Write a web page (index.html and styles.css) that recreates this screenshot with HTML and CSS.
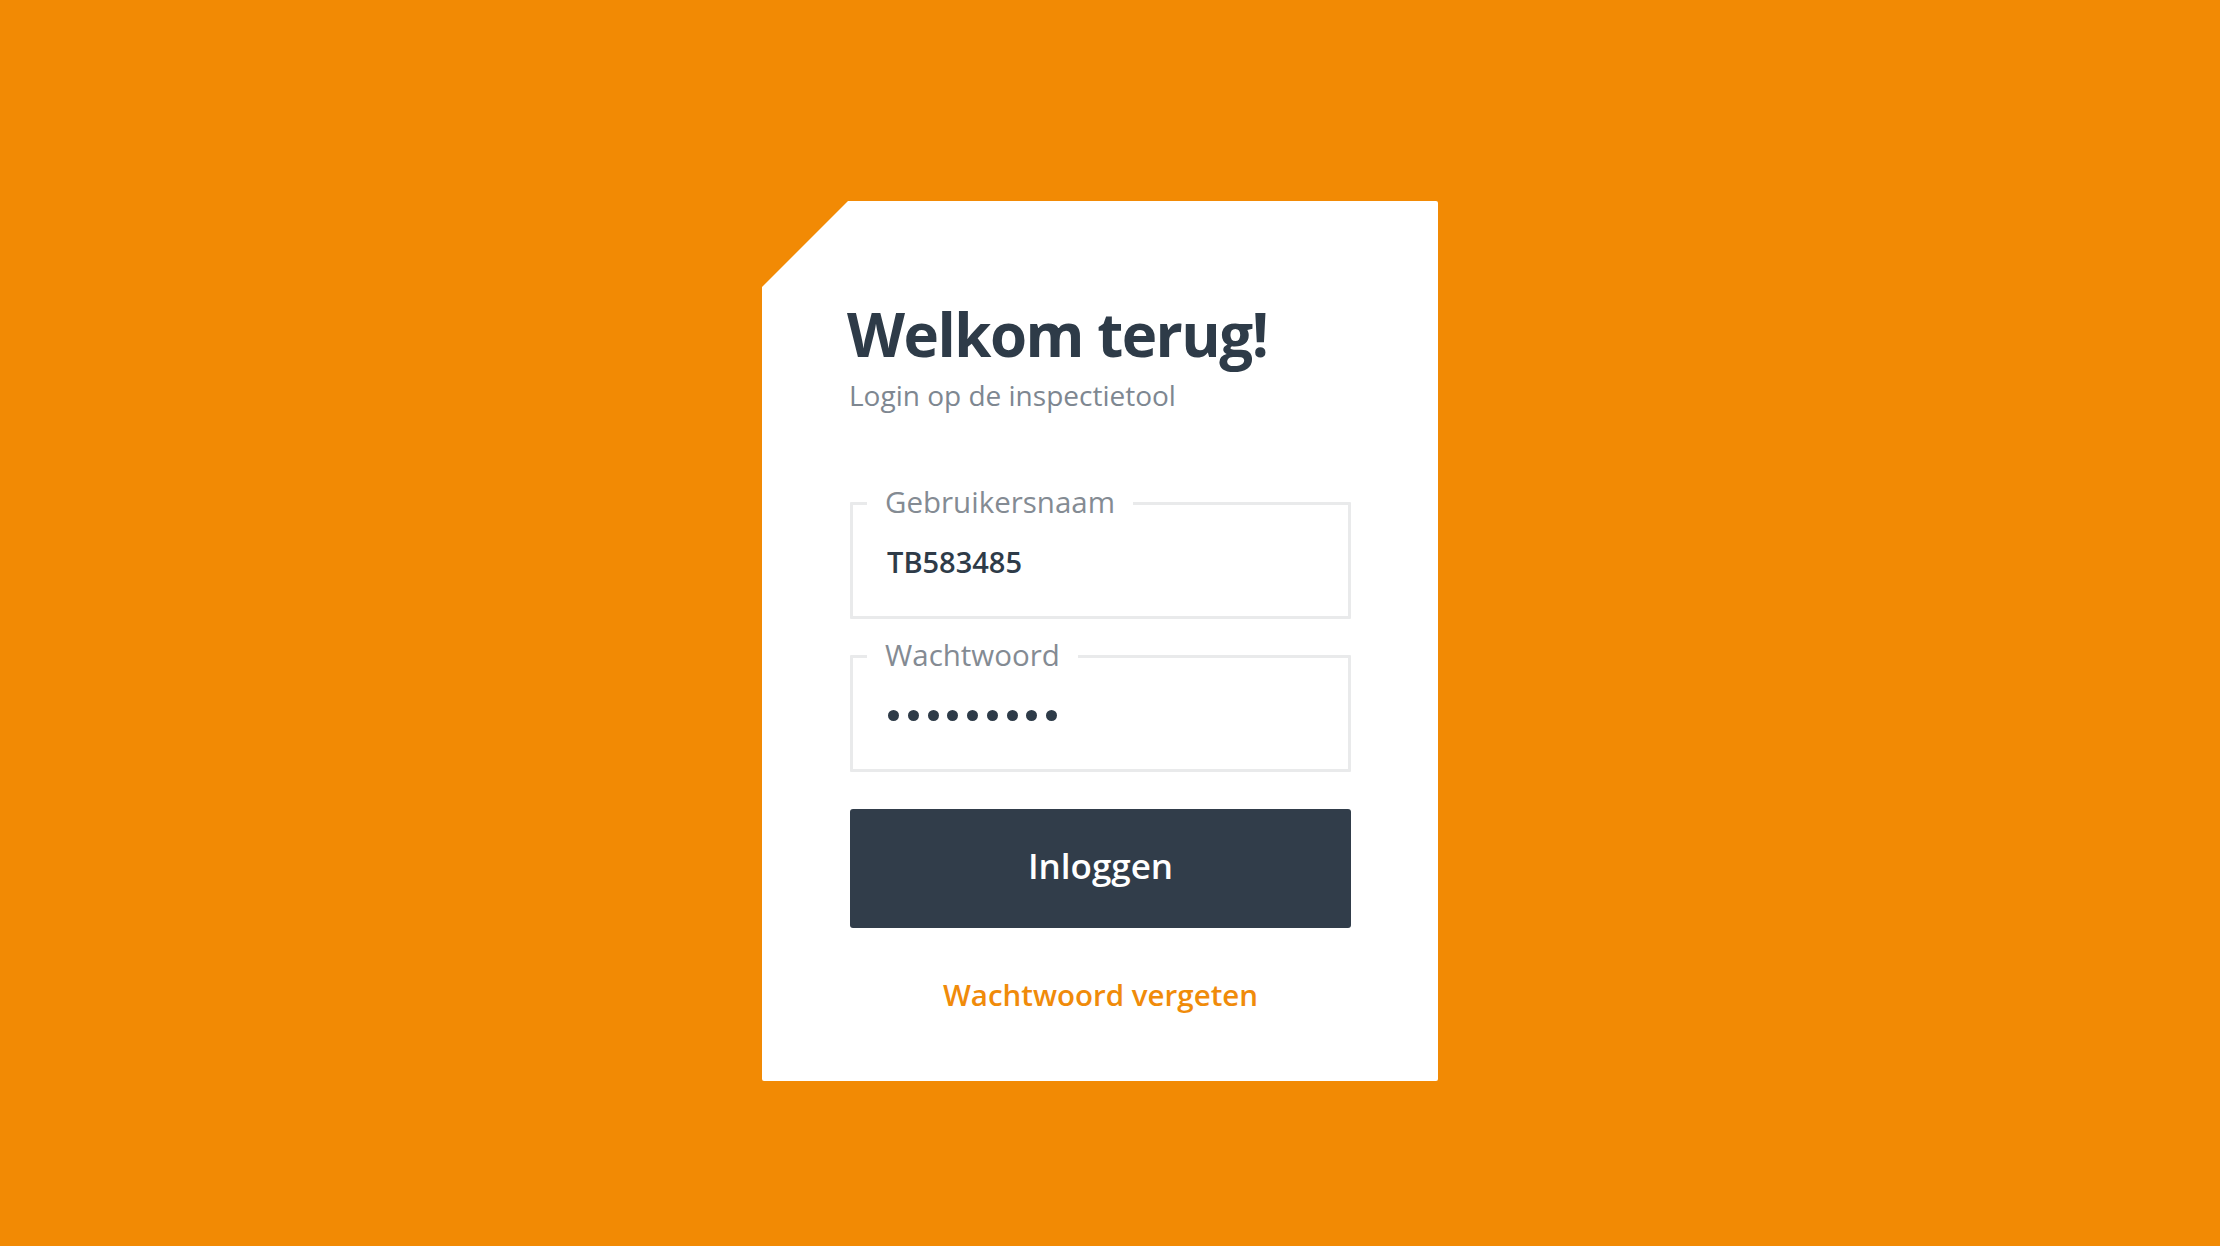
FILE: index.html
```html
<!DOCTYPE html>
<html lang="nl">
<head>
<meta charset="utf-8">
<title>Login - Inspectietool</title>
<link rel="stylesheet" href="styles.css">
</head>
<body>
<main class="page">
  <section class="card">
    <h1 class="title">Welkom terug!</h1>
    <p class="subtitle">Login op de inspectietool</p>
    <form class="form">
      <fieldset class="field">
        <legend class="field-label">Gebruikersnaam</legend>
        <div class="field-value">TB583485</div>
      </fieldset>
      <fieldset class="field field-password">
        <legend class="field-label">Wachtwoord</legend>
        <div class="field-dots" aria-label="wachtwoord">
          <span class="dot"></span><span class="dot"></span><span class="dot"></span><span class="dot"></span><span class="dot"></span><span class="dot"></span><span class="dot"></span><span class="dot"></span><span class="dot"></span>
        </div>
      </fieldset>
      <button type="button" class="btn">Inloggen</button>
      <a class="forgot" href="#">Wachtwoord vergeten</a>
    </form>
  </section>
</main>
</body>
</html>
```

FILE: styles.css
```css
html, body {
  margin: 0;
  padding: 0;
}
body {
  background: #f28a04;
  font-family: "Open Sans", "Noto Sans", sans-serif;
  width: 2220px;
  height: 1246px;
  overflow: hidden;
}
.page {
  padding: 201px 0 0 762px;
}
.card {
  box-sizing: border-box;
  width: 676px;
  height: 880px;
  background: #ffffff;
  border-radius: 2px;
  padding: 103px 0 0 85px;
  clip-path: polygon(86px 0, 100% 0, 100% 100%, 0 100%, 0 86px);
}
.title {
  margin: 0;
  font-size: 60px;
  line-height: 60px;
  font-weight: 700;
  color: #2e3b48;
  letter-spacing: -1.5px;
}
.subtitle {
  margin: 17px 0 0 2px;
  font-size: 28px;
  line-height: 28px;
  font-weight: 400;
  color: #7e8791;
}
.form {
  margin: 78px 0 0 3px;
  width: 501px;
  display: flex;
  flex-direction: column;
}
.field {
  margin: 0;
  padding: 0;
  border: 3px solid #e9eaeb;
  border-radius: 1px;
  min-width: 0;
}
.field-password {
  margin-top: 21px;
}
.field-label {
  margin-left: 14px;
  padding: 0 18px 3px 18px;
  font-size: 29.5px;
  line-height: 30px;
  font-weight: 400;
  color: #848b93;
}
.field-value {
  box-sizing: border-box;
  height: 96px;
  padding: 27px 0 0 34px;
  font-size: 29px;
  line-height: 29px;
  font-weight: 600;
  color: #2e3b48;
}
.field-dots {
  box-sizing: border-box;
  height: 96px;
  padding: 37px 0 0 35px;
  display: flex;
  gap: 8.75px;
  align-items: flex-start;
}
.dot {
  width: 11px;
  height: 11px;
  border-radius: 50%;
  background: #2e3b48;
}
.btn {
  margin-top: 37px;
  height: 119px;
  width: 501px;
  border: 0;
  border-radius: 3px;
  background: #313d4a;
  color: #ffffff;
  font-family: "Open Sans", "Noto Sans", sans-serif;
  font-size: 35px;
  line-height: 35px;
  font-weight: 600;
  padding: 0 0 7px 0;
  cursor: pointer;
}
.forgot {
  margin-top: 52px;
  align-self: center;
  font-size: 29.5px;
  line-height: 30px;
  font-weight: 600;
  color: #f08b0a;
  text-decoration: none;
}
```
